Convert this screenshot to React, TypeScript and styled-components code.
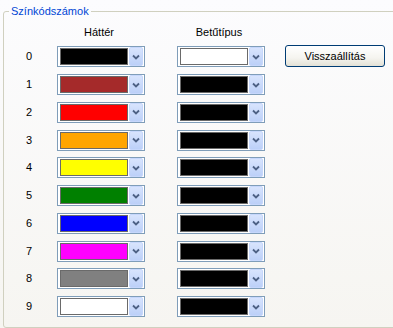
import styled, { createGlobalStyle } from 'styled-components';

const GlobalStyle = createGlobalStyle`
  html, body {
    margin: 0;
    padding: 0;
    overflow: hidden;
  }
  body {
    width: 393px;
    height: 328px;
    background: linear-gradient(#fcfcfe, #f6f5f1);
    font-family: "Liberation Sans", Arial, sans-serif;
    font-size: 11px;
    color: #000;
  }
`;

const Group = styled.fieldset`
  margin: 5px -10px 0 3px;
  padding: 8px 0 6px 0;
  border: 1px solid #d0d0bf;
  border-radius: 3px;
  min-width: 0;
`;

const Legend = styled.legend`
  margin-left: 5px;
  padding: 0 2px;
  color: #0046d5;
  font-size: 11px;
  line-height: 13px;
`;

const Grid = styled.div`
  display: grid;
  grid-template-columns: 53px 88px 32px 88px 20px 100px;
  grid-template-rows: 17px repeat(10, 27.75px);
  align-items: center;
`;

const Header = styled.div<{ $col: number }>`
  grid-column: ${(p) => p.$col};
  grid-row: 1;
  align-self: start;
  text-align: center;
  padding-right: 4px;
  line-height: 13px;
`;

const Num = styled.div<{ $row: number }>`
  grid-column: 1;
  grid-row: ${(p) => p.$row};
  padding-left: 22px;
  line-height: 13px;
`;

const Combo = styled.div<{ $row: number; $col: number }>`
  grid-row: ${(p) => p.$row};
  grid-column: ${(p) => p.$col};
  box-sizing: border-box;
  width: 88px;
  height: 21px;
  border: 1px solid #7f9db9;
  background: #fff;
  display: flex;
  align-items: center;
  padding: 0 1px;
`;

const Swatch = styled.div<{ $color: string }>`
  box-sizing: border-box;
  width: 68px;
  height: 17px;
  margin-left: 1px;
  border: 1px solid #6a6a6a;
  background: ${(p) => p.$color};
`;

const DropButton = styled.div`
  box-sizing: border-box;
  margin-left: auto;
  width: 14px;
  height: 19px;
  border: 1px solid #c6d7fc;
  border-radius: 2px;
  background: linear-gradient(#d8e4fd, #bcd0f8);
  display: flex;
  align-items: center;
  justify-content: center;
`;

const ResetButton = styled.button`
  grid-column: 6;
  grid-row: 2;
  box-sizing: border-box;
  height: 22px;
  width: 100px;
  margin-top: -2px;
  border: 1px solid #003c74;
  border-radius: 3px;
  background: linear-gradient(#ffffff 0%, #f5f4ef 60%, #e3e1d6 100%);
  font-family: "Liberation Sans", Arial, sans-serif;
  font-size: 11px;
  color: #000;
  padding: 0;
`;

function Chevron() {
  return (
    <svg width="8" height="6" viewBox="0 0 8 6">
      <path d="M1 1.5 L4 4.5 L7 1.5" fill="none" stroke="#4d6185" strokeWidth="1.8" />
    </svg>
  );
}

function ColorCombo({ row, col, color }: { row: number; col: number; color: string }) {
  return (
    <Combo $row={row} $col={col}>
      <Swatch $color={color} />
      <DropButton>
        <Chevron />
      </DropButton>
    </Combo>
  );
}

const rows = [
  { bg: '#000000', fg: '#ffffff' },
  { bg: '#a52a2a', fg: '#000000' },
  { bg: '#ff0000', fg: '#000000' },
  { bg: '#ffa500', fg: '#000000' },
  { bg: '#ffff00', fg: '#000000' },
  { bg: '#008000', fg: '#000000' },
  { bg: '#0000ff', fg: '#000000' },
  { bg: '#ff00ff', fg: '#000000' },
  { bg: '#808080', fg: '#000000' },
  { bg: '#ffffff', fg: '#000000' },
];

export default function App() {
  return (
    <>
      <GlobalStyle />
      <Group>
        <Legend>Színkódszámok</Legend>
        <Grid>
          <Header $col={2}>Háttér</Header>
          <Header $col={4}>Betűtípus</Header>
          {rows.map((r, i) => (
            <Row key={i} index={i} bg={r.bg} fg={r.fg} />
          ))}
          <ResetButton>Visszaállítás</ResetButton>
        </Grid>
      </Group>
    </>
  );
}

function Row({ index, bg, fg }: { index: number; bg: string; fg: string }) {
  const row = index + 2;
  return (
    <>
      <Num $row={row}>{index}</Num>
      <ColorCombo row={row} col={2} color={bg} />
      <ColorCombo row={row} col={4} color={fg} />
    </>
  );
}
